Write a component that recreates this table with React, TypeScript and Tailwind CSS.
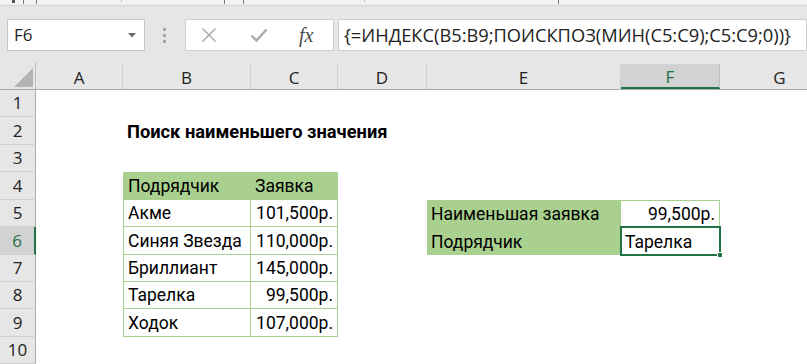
import React from "react";

type Col = { k: string; w: number };
const cols: Col[] = [
  { k: "A", w: 87 },
  { k: "B", w: 128 },
  { k: "C", w: 87 },
  { k: "D", w: 89 },
  { k: "E", w: 194 },
  { k: "F", w: 99 },
  { k: "G", w: 120 },
];
const rowHeights = [27, 28, 27, 28, 27, 28, 27, 27, 28, 27];

type CellSpec = {
  text?: string;
  right?: boolean;
  bold?: boolean;
  fill?: boolean;
  bl?: boolean;
  bt?: boolean;
  br?: boolean;
  bb?: boolean;
  selected?: boolean;
};

const table: Record<string, CellSpec> = {
  B2: { text: "Поиск наименьшего значения", bold: true },
  B4: { text: "Подрядчик", fill: true, bl: true, bt: true, br: true, bb: true },
  C4: { text: "Заявка", fill: true, bt: true, br: true, bb: true },
  B5: { text: "Акме", bl: true, br: true, bb: true },
  C5: { text: "101,500р.", right: true, br: true, bb: true },
  B6: { text: "Синяя Звезда", bl: true, br: true, bb: true },
  C6: { text: "110,000р.", right: true, br: true, bb: true },
  B7: { text: "Бриллиант", bl: true, br: true, bb: true },
  C7: { text: "145,000р.", right: true, br: true, bb: true },
  B8: { text: "Тарелка", bl: true, br: true, bb: true },
  C8: { text: "99,500р.", right: true, br: true, bb: true },
  B9: { text: "Ходок", bl: true, br: true, bb: true },
  C9: { text: "107,000р.", right: true, br: true, bb: true },
  E5: { text: "Наименьшая заявка", fill: true },
  F5: { text: "99,500р.", right: true, bt: true, br: true },
  E6: { text: "Подрядчик", fill: true },
  F6: { text: "Тарелка", selected: true },
};

function Cell({ col, row, h }: { col: Col; row: number; h: number }) {
  const spec = table[col.k + row] || {};
  const cls = [
    "relative flex shrink-0 items-end pb-[3px] px-[4px] leading-[20px] text-[#000]",
    spec.bold ? "text-[18.3px] font-bold" : "text-[17.5px] font-normal",
    spec.fill ? "bg-[#a9d08e]" : "",
    spec.selected ? "z-10" : "",
    spec.right ? "justify-end" : "justify-start",
    spec.bl ? "border-l border-l-[#a9d08e]" : "",
    spec.bt ? "border-t border-t-[#a9d08e]" : "",
    spec.br ? "border-r border-r-[#a9d08e]" : "",
    spec.bb ? "border-b border-b-[#a9d08e]" : "",
  ].join(" ");
  return (
    <div className={cls} style={{ width: col.w, height: h }}>
      {spec.text && <span className="whitespace-nowrap">{spec.text}</span>}
      {spec.selected && (
        <div className="absolute -left-[1px] -top-[1px] -right-[1px] -bottom-[1px] border-2 border-[#217346]">
          <div className="absolute -right-[4px] -bottom-[4px] h-[6px] w-[6px] border border-white bg-[#217346]" />
        </div>
      )}
    </div>
  );
}

function XIcon() {
  return (
    <svg width="16" height="16" viewBox="0 0 16 16" fill="none">
      <path d="M1.5 1.5 L14.5 14.5 M14.5 1.5 L1.5 14.5" stroke="#a6a6a6" strokeWidth="1.4" />
    </svg>
  );
}

function CheckIcon() {
  return (
    <svg width="18" height="16" viewBox="0 0 18 16" fill="none">
      <path d="M1.5 8.5 L6.5 13.5 L16.5 2.5" stroke="#ababab" strokeWidth="2.4" />
    </svg>
  );
}

export default function App() {
  return (
    <div
      className="relative h-[364px] w-[807px] overflow-hidden bg-white"
      style={{ fontFamily: "Roboto, 'Noto Sans', sans-serif" }}
    >
      {/* ribbon remnant */}
      <div className="flex h-[6px] items-start border-b border-[#d4d4d4] bg-[#f3f3f3]">
        <div className="ml-[12px] mt-0 h-[3px] w-[3px] bg-[#555]" />
        <div className="ml-[8px] h-[4px] w-px bg-[#777]" />
        <div className="ml-[12px] h-[4px] w-px bg-[#777]" />
        <div className="ml-[84px] h-[2px] w-px bg-[#bbb]" />
        <div className="ml-[102px] h-[4px] w-px bg-[#777]" />
        <div className="ml-[18px] h-[4px] w-px bg-[#777]" />
        <div className="ml-[120px] h-[2px] w-px bg-[#bbb]" />
        <div className="ml-[193px] h-[4px] w-px bg-[#777]" />
      </div>

      {/* formula bar */}
      <div className="flex h-[56px] items-start bg-[#e6e6e6] pt-[13px]">
        <div className="ml-[7px] flex h-[32px] w-[138px] items-center justify-between border border-[#c6c6c6] bg-white pl-[6px] pr-[8px]">
          <span className="text-[17px] text-[#222]" style={{ fontFamily: "'Open Sans', 'Noto Sans', sans-serif" }}>
            F6
          </span>
          <svg width="8" height="5" viewBox="0 0 8 5">
            <path d="M0 0 L8 0 L4 4.5 Z" fill="#6b6b6b" />
          </svg>
        </div>
        <div className="ml-[18px] mt-[9px] flex flex-col gap-[3px]">
          <div className="h-[3px] w-[3px] bg-[#a8a8a8]" />
          <div className="h-[3px] w-[3px] bg-[#a8a8a8]" />
          <div className="h-[3px] w-[3px] bg-[#a8a8a8]" />
        </div>
        <div className="ml-[19px] flex h-[32px] w-[149px] items-center border border-[#d0d0d0] bg-white">
          <div className="ml-[15px] flex">
            <XIcon />
          </div>
          <div className="ml-[33px] flex">
            <CheckIcon />
          </div>
          <span
            className="ml-[31px] text-[20px] italic text-[#4a4a4a]"
            style={{ fontFamily: "'Liberation Serif', serif" }}
          >
            fx
          </span>
        </div>
        <div className="ml-[4px] flex h-[32px] flex-1 items-center border border-[#d0d0d0] bg-white pl-[5px]">
          <span
            className="whitespace-nowrap text-[18.3px] text-[#222]"
            style={{ fontFamily: "'Open Sans', 'Noto Sans', sans-serif" }}
          >
            {"{=ИНДЕКС(B5:B9;ПОИСКПОЗ(МИН(C5:C9);C5:C9;0))}"}
          </span>
        </div>
      </div>

      {/* column headers */}
      <div
        className="flex h-[28px] border-b border-[#ababab] bg-[#e6e6e6]"
        style={{ fontFamily: "'Open Sans', 'Noto Sans', sans-serif" }}
      >
        <div className="relative h-full w-[36px] shrink-0 border-r border-[#c0c0c0]">
          <svg className="absolute left-[14px] top-[6px]" width="19" height="19" viewBox="0 0 19 19">
            <path d="M19 0 L19 19 L0 19 Z" fill="#b4b4b4" />
          </svg>
        </div>
        {cols.map((c) => {
          const sel = c.k === "F";
          return (
            <div
              key={c.k}
              className={
                "mt-[2px] flex shrink-0 items-center justify-center border-r text-[17px] " +
                (sel
                  ? "border-b-2 border-b-[#217346] border-r-[#c0c0c0] bg-[#d2d2d2] text-[#217346]"
                  : "border-r-[#d0d0d0] text-[#222]")
              }
              style={{ width: c.w }}
            >
              <span className="pt-[3px]">{c.k}</span>
            </div>
          );
        })}
      </div>

      {/* rows */}
      {rowHeights.map((h, i) => {
        const r = i + 1;
        const sel = r === 6;
        return (
          <div key={r} className="flex" style={{ height: h }}>
            <div
              className={
                "flex w-[36px] shrink-0 items-center justify-center border-b border-b-[#d0d0d0] text-[17px] " +
                (sel
                  ? "border-r-2 border-r-[#217346] bg-[#d2d2d2] text-[#217346]"
                  : "border-r border-r-[#ababab] bg-[#e6e6e6] text-[#222]")
              }
              style={{ fontFamily: "'Open Sans', 'Noto Sans', sans-serif" }}
            >
              {r}
            </div>
            {cols.map((c) => (
              <Cell key={c.k} col={c} row={r} h={h} />
            ))}
          </div>
        );
      })}
    </div>
  );
}
